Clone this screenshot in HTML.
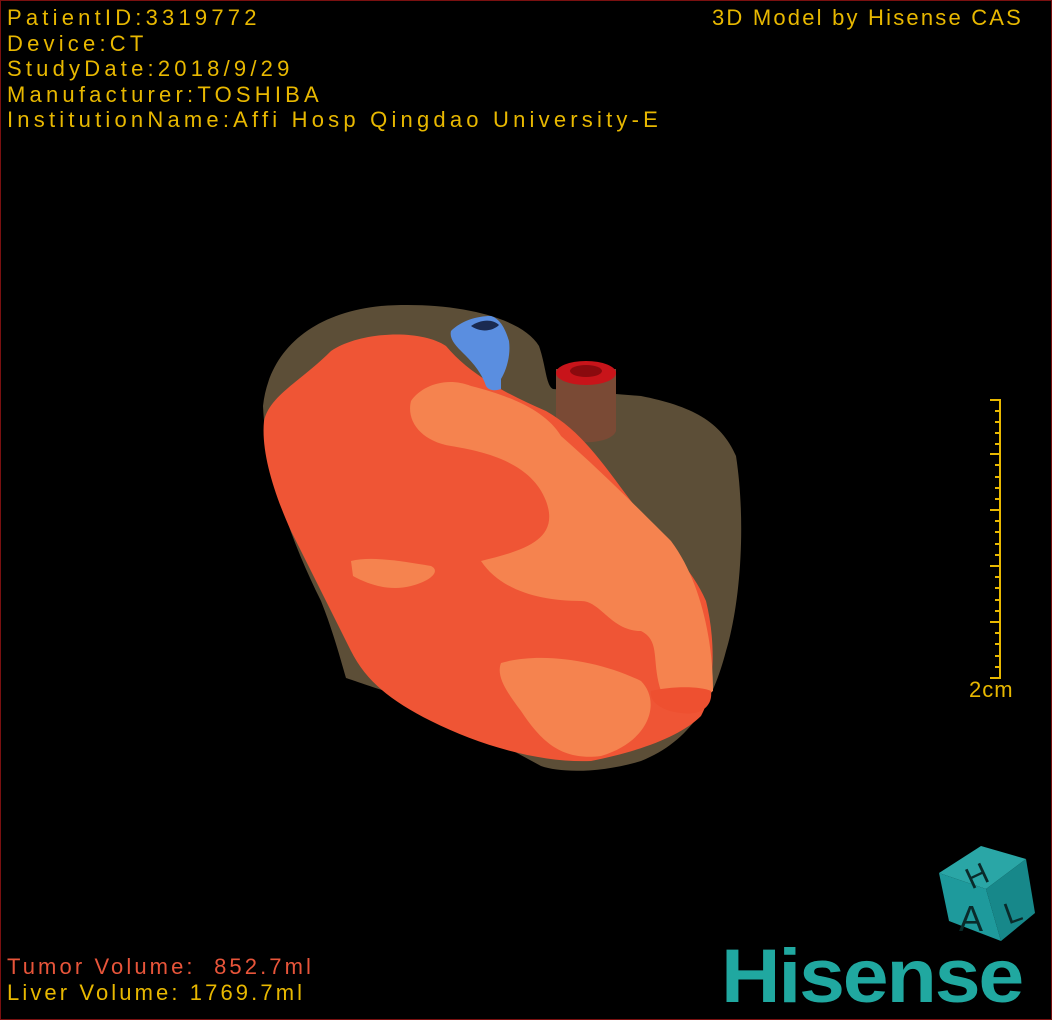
<!DOCTYPE html>
<html><head><meta charset="utf-8"><style>
html,body{margin:0;padding:0;background:#000;}
#c{position:relative;width:1050px;height:1018px;border:1px solid #7a1010;overflow:hidden;background:#000;}
.t{position:absolute;font-family:"Liberation Sans",sans-serif;font-size:22px;color:#e8b800;white-space:pre;line-height:25.5px;}
</style></head><body><div id="c">
<svg width="1050" height="1018" style="position:absolute;left:0;top:0">
<path d="M262,405 C268,350 310,312 380,305 C450,300 520,315 538,345 C545,365 545,385 552,388 L640,395 C690,405 720,420 735,455 C745,520 740,600 725,650 C712,700 690,740 640,760 C600,772 560,772 540,765 L420,700 C380,690 355,680 345,677 C340,660 332,630 320,600 C290,540 265,470 262,405 Z" fill="#5c4e37"/>
<path d="M555,368 L555,430 C560,445 610,445 615,430 L615,368 Z" fill="#7a4a35"/>
<ellipse cx="585" cy="372" rx="30" ry="12" fill="#c8141a"/>
<ellipse cx="585" cy="370" rx="16" ry="6" fill="#8a0a0e"/>
<path d="M263,420 C268,395 300,380 330,350 C360,330 420,328 445,345 C470,375 510,395 545,410 C580,430 600,460 630,500 C660,540 690,565 705,600 C715,640 714,690 700,715 C680,735 640,750 590,760 C540,762 480,745 430,720 C390,700 365,680 350,650 C330,610 310,570 290,530 C272,490 260,450 263,420 Z" fill="#ef5535"/>
<path d="M410,400 C420,385 445,375 470,385 C510,395 545,410 560,435 C600,470 640,510 670,540 C700,580 712,640 712,690 C700,700 680,700 660,690 C650,660 660,640 640,630 C610,630 600,600 580,600 C540,600 500,590 480,560 C520,550 560,540 545,500 C530,460 480,450 450,445 C420,440 405,420 410,400 Z" fill="#f5834f"/>
<path d="M350,560 C370,555 400,560 430,565 C440,570 430,580 410,585 C390,590 370,585 352,575 Z" fill="#f5834f"/>
<path d="M500,662 C540,650 600,660 640,680 C660,700 650,740 600,755 C560,760 540,740 520,710 C505,690 495,675 500,662 Z" fill="#f5834f"/>
<path d="M650,690 C670,685 700,685 710,690 C712,705 700,715 680,712 C660,710 648,700 650,690 Z" fill="#ee5030"/>
<path d="M450,330 C460,320 475,315 490,315 C500,318 505,330 508,340 C510,355 505,370 500,378 L500,388 C495,390 488,390 485,385 C480,370 470,360 462,352 C455,345 448,338 450,330 Z" fill="#5a8ee0"/>
<path d="M470,325 C480,318 492,318 498,324 C492,330 480,332 470,325 Z" fill="#1a2a50"/>
<g stroke="#e8b800" stroke-width="2">
<line x1="999" y1="398" x2="999" y2="678"/>
<line x1="989" y1="399" x2="999" y2="399"/><line x1="989" y1="453" x2="999" y2="453"/><line x1="989" y1="509" x2="999" y2="509"/><line x1="989" y1="565" x2="999" y2="565"/><line x1="989" y1="621" x2="999" y2="621"/><line x1="989" y1="677" x2="999" y2="677"/>
<line x1="994" y1="410" x2="999" y2="410"/><line x1="994" y1="421" x2="999" y2="421"/><line x1="994" y1="432" x2="999" y2="432"/><line x1="994" y1="443" x2="999" y2="443"/>
<line x1="994" y1="464" x2="999" y2="464"/><line x1="994" y1="476" x2="999" y2="476"/><line x1="994" y1="487" x2="999" y2="487"/><line x1="994" y1="498" x2="999" y2="498"/>
<line x1="994" y1="520" x2="999" y2="520"/><line x1="994" y1="531" x2="999" y2="531"/><line x1="994" y1="543" x2="999" y2="543"/><line x1="994" y1="554" x2="999" y2="554"/>
<line x1="994" y1="576" x2="999" y2="576"/><line x1="994" y1="587" x2="999" y2="587"/><line x1="994" y1="599" x2="999" y2="599"/><line x1="994" y1="610" x2="999" y2="610"/>
<line x1="994" y1="632" x2="999" y2="632"/><line x1="994" y1="643" x2="999" y2="643"/><line x1="994" y1="655" x2="999" y2="655"/><line x1="994" y1="666" x2="999" y2="666"/>
</g>
<polygon points="938,872 980,845 1025,858 985,888" fill="#2aa6a6"/>
<polygon points="938,872 985,888 1000,940 948,920" fill="#1e9a9c"/>
<polygon points="985,888 1025,858 1034,912 1000,940" fill="#17888a"/>
<text x="963" y="885" font-family="Liberation Sans" font-size="30" fill="#0a2a2a" transform="rotate(-25 975 870)">H</text>
<text x="958" y="930" font-family="Liberation Sans" font-size="36" fill="#0a2a2a">A</text>
<text x="1003" y="922" font-family="Liberation Sans" font-size="30" fill="#0a2a2a" transform="rotate(-20 1010 910)">L</text>
</svg>
<div class="t" style="left:6px;top:4px;letter-spacing:4.2px">PatientID:3319772
Device:CT
StudyDate:2018/9/29
Manufacturer:TOSHIBA
InstitutionName:Affi Hosp Qingdao University-E</div>
<div class="t" style="left:711px;top:4px;letter-spacing:2.2px">3D Model by Hisense CAS</div>
<div class="t" style="left:968px;top:676px;letter-spacing:1px">2cm</div>
<div class="t" style="left:6px;top:953px;color:#e8553a;letter-spacing:3.1px">Tumor Volume:  852.7ml</div>
<div class="t" style="left:6px;top:979px;letter-spacing:3.1px">Liver Volume: 1769.7ml</div>
<div style="position:absolute;left:720px;top:936px;font-family:'Liberation Sans',sans-serif;font-weight:bold;font-size:76px;line-height:80px;color:#20a8a0;letter-spacing:-2px;transform:scaleX(1.085);transform-origin:left">Hisense</div>
</div></body></html>
